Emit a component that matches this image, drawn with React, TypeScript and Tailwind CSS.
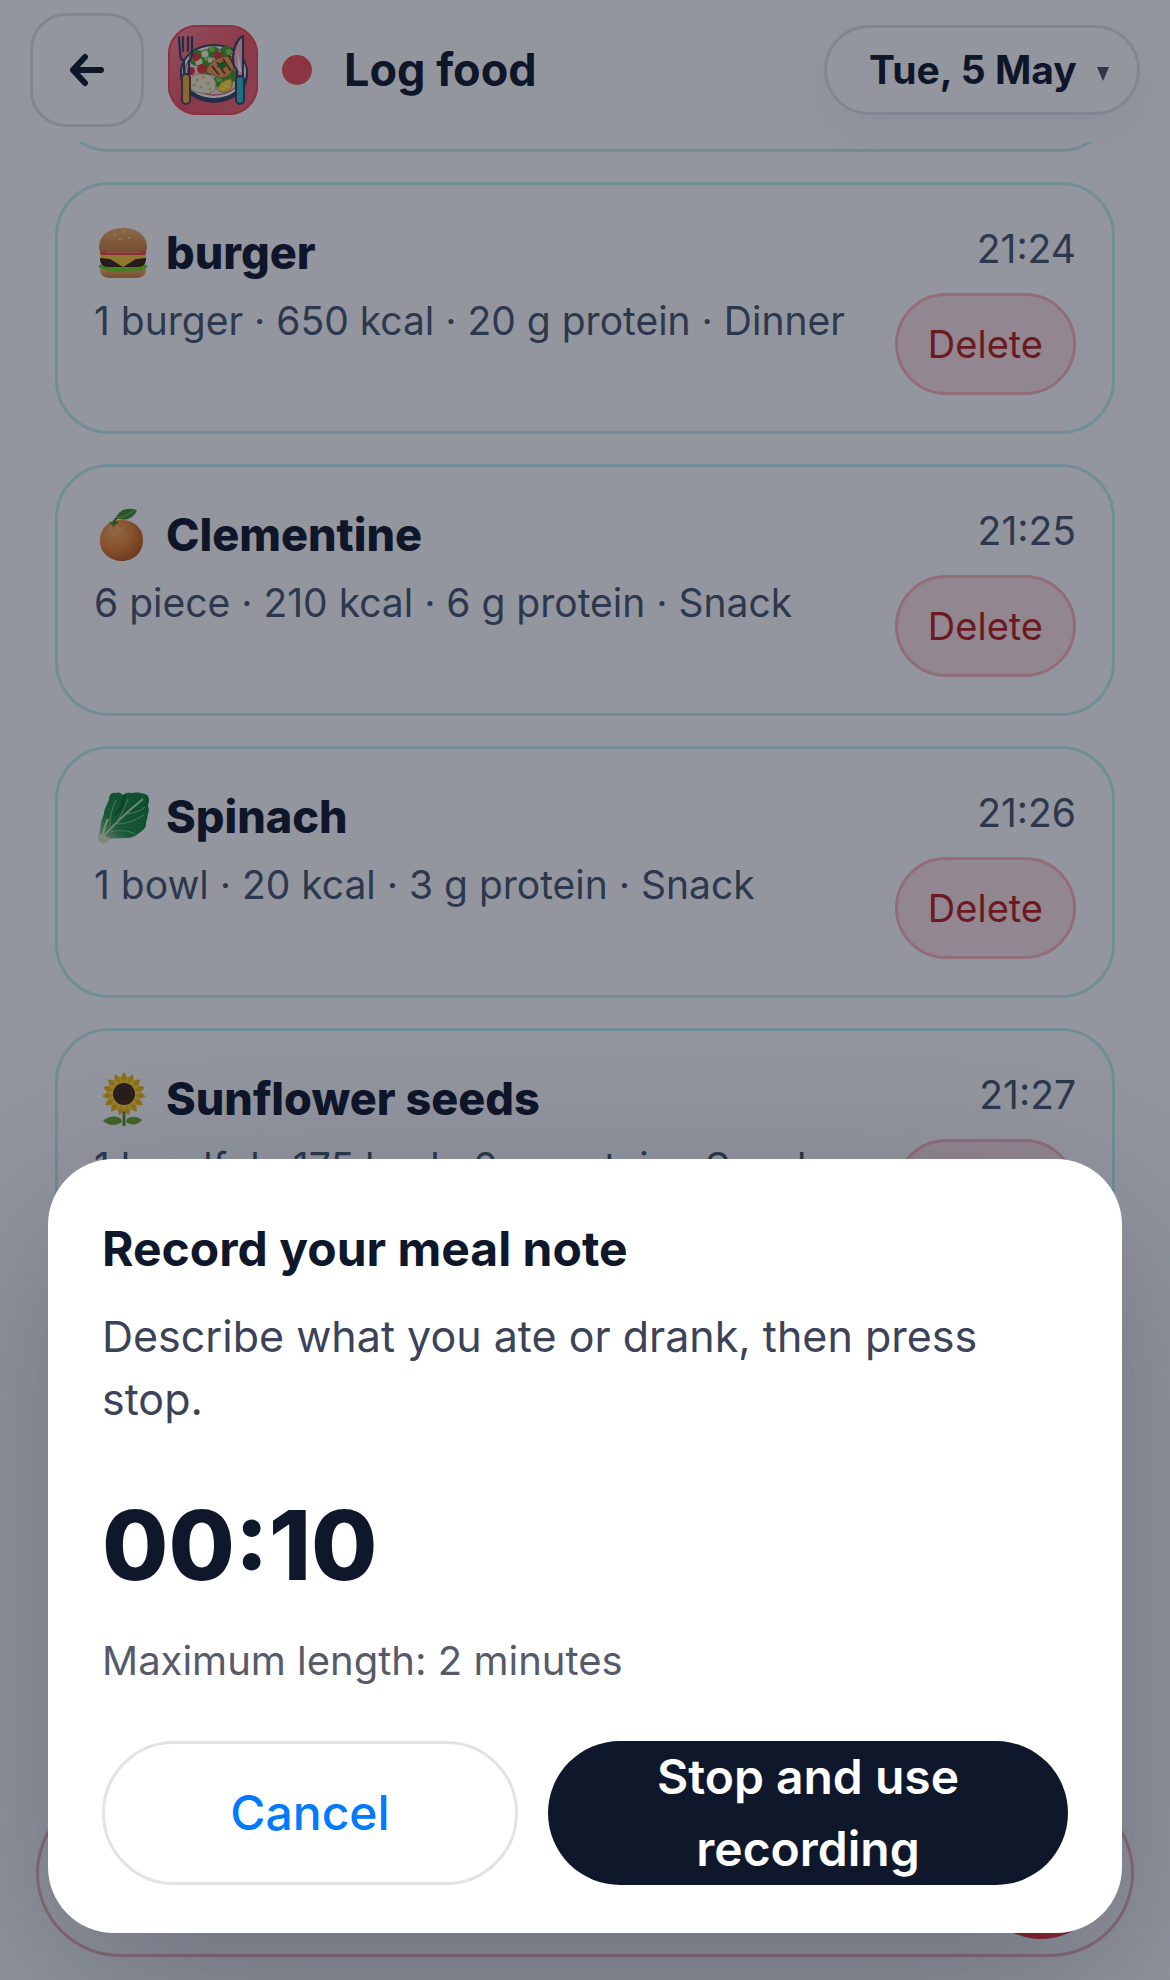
import { useState } from 'react';
import type { ReactNode } from 'react';

type Entry = {
  name: string;
  detail: string;
  time: string;
  icon: ReactNode;
};

const dates = ['Tue, 5 May', 'Mon, 4 May', 'Sun, 3 May'];

function BurgerIcon() {
  return (
    <svg viewBox="0 0 54 54" className="size-[54px]" aria-hidden="true">
      <defs>
        <linearGradient id="bun" x1="0" y1="0" x2="0" y2="1">
          <stop offset="0" stopColor="#f2ae62" />
          <stop offset="1" stopColor="#c97a35" />
        </linearGradient>
      </defs>
      <path d="M4 43h46c0 6-4 9-10 9H14c-6 0-10-3-10-9z" fill="url(#bun)" />
      <path d="M3 39c3-2 45-2 48 0 1 4-2 3-4 5-3 2-5-1-8 1-3 1-5-1-8 0-3 2-6 0-9 1-3 1-5-2-8-1-3 0-4-2-7-2-3 0-5-1-4-4z" fill="#76d420" />
      <path d="M4 33c0-3 3-4 6-4h34c4 0 6 1 6 4 0 5-3 8-8 8H12c-5 0-8-3-8-8z" fill="#3c1d16" />
      <path d="M4 28h46v4l-10 1-13 8-13-8-10-1z" fill="#fcc933" />
      <path d="M5 24h44c2 2 1 5-1 5H6c-2 0-3-3-1-5z" fill="#e8443c" />
      <path d="M10 26h34" stroke="#ff9c86" strokeWidth="1.5" />
      <path d="M3 22C3 9 13 2 27 2s24 7 24 20c0 3-3 4-7 4H10c-4 0-7-1-7-4z" fill="url(#bun)" />
      <g fill="#ffe0a4">
        <ellipse cx="19" cy="9" rx="1.5" ry=".8" />
        <ellipse cx="28" cy="6" rx="1.5" ry=".8" />
        <ellipse cx="33" cy="12" rx="1.5" ry=".8" />
        <ellipse cx="24" cy="13" rx="1.5" ry=".8" />
      </g>
    </svg>
  );
}

function ClementineIcon() {
  return (
    <svg viewBox="0 0 54 54" className="size-[54px]" aria-hidden="true">
      <defs>
        <radialGradient id="peel" cx=".35" cy=".3" r=".75">
          <stop offset="0" stopColor="#f8ab58" />
          <stop offset=".55" stopColor="#e8822f" />
          <stop offset="1" stopColor="#bd5415" />
        </radialGradient>
      </defs>
      <path d="M25 12c13 0 22 8 22 20S38 53 26 53 4 45 4 33s8-21 21-21z" fill="url(#peel)" />
      <path d="M16 16c-2 3-2 6-2 9m5-8c3 2 5 4 7 6" stroke="#ffca85" strokeWidth="1.2" fill="none" opacity=".7" />
      <path d="M13 13l4 2 2-3 4 3c-3 2-5 2-5 4-2-1-4-3-5-6z" fill="#4a8f22" />
      <path d="M17 15c1-4 5-6 9-8" stroke="#52701c" strokeWidth="2" fill="none" />
      <path d="M20 10C23 2 31-1 41 2c-3 8-11 12-21 8z" fill="#3f8a2c" />
      <path d="M21 10c7-1 12-4 18-8" stroke="#8cc662" strokeWidth="1" fill="none" />
    </svg>
  );
}

function SpinachIcon() {
  return (
    <svg viewBox="0 0 54 54" className="size-[54px]" aria-hidden="true">
      <defs>
        <linearGradient id="leaf" x1="1" y1="0" x2="0" y2="1">
          <stop offset="0" stopColor="#0d7a32" />
          <stop offset=".65" stopColor="#1c8c42" />
          <stop offset="1" stopColor="#bfe0a5" />
        </linearGradient>
      </defs>
      <path d="M2 48C5 39 4 32 8 24c0-6 4-10 5-15 0-4 3-7 7-6 3-1 5 0 7 2 3-3 7-2 10-2 4-1 8 0 12 1 4 1 4 5 4 8-2 3 0 6 0 9-2 4-1 8-3 11 1 6-4 9-8 12-5 4-9 4-14 4-6 1-12-1-18 3z" fill="url(#leaf)" />
      <path d="M27 5c-1 8-5 15-10 22l9-7c4-5 4-10 4-16z" fill="#085d27" opacity=".6" />
      <path d="M6 48C19 33 31 22 47 9" stroke="#c5e6ae" strokeWidth="1.8" fill="none" />
      <path d="M14 38c-1-9 2-19 6-28M21 32c5-8 8-16 11-23M21 34c9 0 17-3 27-9M14 42c9-2 18-2 25 2M31 24c6-1 12-2 18-7" stroke="#8cc882" strokeWidth="1" fill="none" />
      <path d="M12 29c-3 5-3 9-5 14" stroke="#d2ecc0" strokeWidth="2" fill="none" />
      <path d="M1 46l7-3c1 4 5 5 8 5l-8 6c-3 0-6-3-7-8z" fill="#dbe8bd" />
    </svg>
  );
}

function SunflowerIcon() {
  const angles = [0, 24, 48, 72, 96, 120, 144, 168, 192, 216, 240, 264, 288, 312, 336];
  return (
    <svg viewBox="0 0 54 54" className="size-[54px]" aria-hidden="true">
      <path d="M28 38v16" stroke="#5b8f20" strokeWidth="3" />
      <path d="M26 50c-6 4-13 4-19-1 5-5 13-6 18-2zM30 50c5 4 12 3 16-2-5-4-11-4-15-1z" fill="#6fa126" />
      {angles.map((a) => (
        <path key={a} d="M28 22c-6-8-5-15 0-22 5 7 6 14 0 22z" fill="#f5b90d" transform={`rotate(${a} 28 22)`} />
      ))}
      {angles.map((a) => (
        <path key={a} d="M28 22c-3-6-3-12 0-18 3 6 3 12 0 18z" fill="#ffdc2c" transform={`rotate(${a + 12} 28 22)`} />
      ))}
      <circle cx="28" cy="22" r="11" fill="#3f2411" />
      <circle cx="28" cy="22" r="8" fill="none" stroke="#5a3414" strokeWidth="2" strokeDasharray="1 2" />
    </svg>
  );
}

function MealIcon() {
  return (
    <svg viewBox="0 0 90 90" className="size-[90px] shrink-0" aria-hidden="true">
      <defs>
        <linearGradient id="tile" x1="0" y1="0" x2="1" y2="1">
          <stop offset="0" stopColor="#ff8590" />
          <stop offset=".5" stopColor="#f05563" />
          <stop offset="1" stopColor="#f26773" />
        </linearGradient>
      </defs>
      <rect width="90" height="90" rx="29" fill="url(#tile)" />
      <rect x="1" y="1" width="88" height="88" rx="28" fill="none" stroke="#f04a55" strokeWidth="2" />
      <ellipse cx="46" cy="50" rx="34" ry="28" fill="#36405c" />
      <ellipse cx="46" cy="47" rx="33" ry="27" fill="#fff" stroke="#36405c" strokeWidth="2" />
      <ellipse cx="46" cy="47" rx="29" ry="23" fill="#f0e2e6" stroke="#c66c7b" strokeWidth="1.5" />
      <g fill="#3f9c25">
        <circle cx="29" cy="33" r="8" />
        <circle cx="45" cy="27" r="6" />
        <circle cx="58" cy="27" r="6" />
        <circle cx="38" cy="43" r="8" />
        <circle cx="54" cy="56" r="8" />
        <circle cx="65" cy="51" r="6" />
      </g>
      <g fill="#83d13f">
        <circle cx="25" cy="33" r="3" />
        <circle cx="44" cy="24" r="3" />
        <circle cx="61" cy="27" r="3" />
        <circle cx="51" cy="54" r="3" />
      </g>
      <g fill="#f3f5ca" stroke="#7cb83c" strokeWidth="1">
        <circle cx="37" cy="29" r="4" />
        <circle cx="31" cy="37" r="4" />
        <circle cx="42" cy="35" r="3" />
      </g>
      <g fill="#e82f32">
        <circle cx="50" cy="31" r="4" />
        <circle cx="28" cy="32" r="4" />
        <circle cx="23" cy="46" r="4" />
        <circle cx="34" cy="44" r="5" />
      </g>
      <path d="M38 46c2-8 12-15 25-15 5 4 5 11 0 17-5 6-13 6-17 2-3-1-6-1-8-4z" fill="#e99b50" stroke="#a75a22" strokeWidth="1" />
      <path d="M44 41l7 9m-2-13l8 12m-2-15l8 12m-2-15l5 9" stroke="#753412" strokeWidth="1.8" />
      <path d="M49 41c1-4 4-2 5-5 3 1 2 4 6 3-1 4-4 2-4 5-3-2-4 0-7-3z" fill="#257b1c" />
      <path d="M22 60c-2-8 5-12 12-11 9-1 14 5 14 12-1 7-8 9-15 7-6 0-10-3-11-8z" fill="#f4edcf" stroke="#b9a272" strokeWidth="1" />
      <g fill="#e8c44c">
        <circle cx="29" cy="55" r="1.5" />
        <circle cx="35" cy="52" r="1.5" />
        <circle cx="40" cy="58" r="1.5" />
        <circle cx="33" cy="62" r="1.5" />
        <circle cx="26" cy="60" r="1.5" />
        <circle cx="42" cy="64" r="1.5" />
      </g>
      <path d="M49 64c3-6 8-10 14-10 3 6 0 12-6 13-4 0-7 0-8-3z" fill="#ffd52e" stroke="#c48913" strokeWidth="1" />
      <path d="M58 61l-5-3m5 3l3-5m-3 5l4 2m-4-2l-4 4" stroke="#fff2a0" strokeWidth="1" />
      <path d="M11 12l1 16c0 5 2 7 4 8v14h5V36c2-1 3-3 3-8V12M15 12v14M20 12v14" fill="none" stroke="#36405c" strokeWidth="2.2" strokeLinecap="round" />
      <rect x="14" y="49" width="8" height="30" rx="4" fill="#f4ac2e" stroke="#4a4452" strokeWidth="2" />
      <path d="M75 11c-6 3-10 13-10 22 0 6 1 10 4 12v7h6z" fill="#ffb5c0" stroke="#36405c" strokeWidth="2.2" strokeLinejoin="round" />
      <path d="M70 45V28l4 20" fill="#fff" />
      <rect x="68" y="51" width="8" height="28" rx="4" fill="#26bdcc" stroke="#36405c" strokeWidth="2" />
    </svg>
  );
}

const entries: Entry[] = [
  { name: 'burger', detail: '1 burger · 650 kcal · 20 g protein · Dinner', time: '21:24', icon: <BurgerIcon /> },
  { name: 'Clementine', detail: '6 piece · 210 kcal · 6 g protein · Snack', time: '21:25', icon: <ClementineIcon /> },
  { name: 'Spinach', detail: '1 bowl · 20 kcal · 3 g protein · Snack', time: '21:26', icon: <SpinachIcon /> },
  { name: 'Sunflower seeds', detail: '1 handful · 175 kcal · 6 g protein · Snack', time: '21:27', icon: <SunflowerIcon /> },
];

function EntryCard({ entry }: { entry: Entry }) {
  return (
    <li className="flex h-[252px] shrink-0 justify-between rounded-[54px] border-[3px] border-[#c2eeee] bg-white px-9 py-[34px]">
      <div className="pt-1">
        <h2 className="flex h-[60px] items-center gap-4 pl-0.5 text-[45px] font-extrabold text-slate-900">
          {entry.icon}
          {entry.name}
        </h2>
        <p className="mt-2 text-[39px] leading-[60px] text-slate-600">{entry.detail}</p>
      </div>
      <div className="flex flex-col items-end">
        <time className="text-[39px] leading-[60px] text-slate-600">{entry.time}</time>
        <button className="mt-3.5 h-[102px] rounded-full border-[3px] border-[#fcb4b8] bg-[#fee2e4] px-[30px] text-[38px] text-[#b91c1c]">
          Delete
        </button>
      </div>
    </li>
  );
}

function Header() {
  const [date, setDate] = useState(dates[0]);

  return (
    <header className="flex h-[142px] shrink-0 items-center bg-white px-[30px] pb-0.5">
      <button
        aria-label="Back"
        className="flex size-[114px] items-center justify-center rounded-[36px] border-[3px] border-[#e2e2e8] text-slate-900"
      >
        <svg viewBox="0 0 36 36" className="size-9" fill="none" stroke="currentColor" strokeWidth="6" strokeLinecap="round" strokeLinejoin="round" aria-hidden="true">
          <path d="M32 18H4M16 5L4 18l12 13" />
        </svg>
      </button>
      <div className="ml-6 flex items-center gap-6">
        <MealIcon />
        <span className="size-[30px] rounded-full bg-[#ef4f55]" />
      </div>
      <h1 className="ml-8 text-[45px] font-bold text-slate-900">Log food</h1>
      <div className="relative ml-auto flex h-[90px] w-[316px] items-center rounded-full border-[3px] border-[#e2e2e8] shadow-[0_18px_45px_rgba(15,23,42,0.05)]">
        <select
          aria-label="Date"
          value={date}
          onChange={(e) => setDate(e.target.value)}
          className="h-full w-full appearance-none rounded-full bg-transparent pl-[42px] text-[39px] font-bold text-slate-900"
        >
          {dates.map((d) => (
            <option key={d}>{d}</option>
          ))}
        </select>
        <svg viewBox="0 0 12 14" className="pointer-events-none absolute top-[39px] right-7 h-3.5 w-3" aria-hidden="true">
          <path d="M0 0h12L6 14z" fill="#475569" />
        </svg>
      </div>
    </header>
  );
}

function RecordDialog() {
  return (
    <div className="absolute inset-0 flex items-end bg-slate-900/45 px-12 pb-[47px]">
      <section
        role="dialog"
        aria-modal="true"
        aria-labelledby="record-title"
        className="w-full rounded-[66px] bg-white px-[54px] pt-[54px] pb-12 shadow-[0_60px_180px_rgba(15,23,42,0.28)]"
      >
        <h2 id="record-title" className="text-[48px] leading-[72px] font-bold text-slate-900">
          Record your meal note
        </h2>
        <p className="mt-5 text-[43px] leading-[63px] text-[#3c4257]">
          Describe what you ate or drank, then press stop.
        </p>
        <div role="timer" className="mt-[66px] text-[96px] leading-[96px] font-extrabold text-slate-900">
          00:10
        </div>
        <p className="mt-[38px] text-[40px] leading-[60px] text-[#555b6b]">Maximum length: 2 minutes</p>
        <div className="mt-[50px] grid grid-cols-[4fr_5fr] gap-[30px]">
          <button className="h-36 rounded-full border-[3px] border-[#e3e3e5] text-[48px] font-medium text-[#007aff]">
            Cancel
          </button>
          <button className="h-36 rounded-full bg-slate-900 px-20 text-[48px] leading-[72px] font-semibold text-white">
            Stop and use recording
          </button>
        </div>
      </section>
    </div>
  );
}

export default function App() {
  return (
    <div className="relative flex h-screen flex-col overflow-hidden bg-white font-[Inter,sans-serif]">
      <Header />
      <main className="min-h-0 flex-1 overflow-hidden px-[55px]">
        <ul className="-mt-[242px] flex flex-col gap-[30px]">
          <li className="h-[252px] shrink-0 rounded-[54px] border-[3px] border-[#c2eeee]" />
          {entries.map((entry) => (
            <EntryCard key={entry.name} entry={entry} />
          ))}
        </ul>
      </main>
      {/* Composer sits under the dialog */}
      <div className="absolute inset-x-9 bottom-[23px] flex h-[168px] items-center justify-end rounded-full border-[3px] border-[#f0b4b8] bg-white pr-6">
        <button aria-label="Record" className="size-[132px] rounded-full bg-[#ef3340]" />
      </div>
      <RecordDialog />
    </div>
  );
}
